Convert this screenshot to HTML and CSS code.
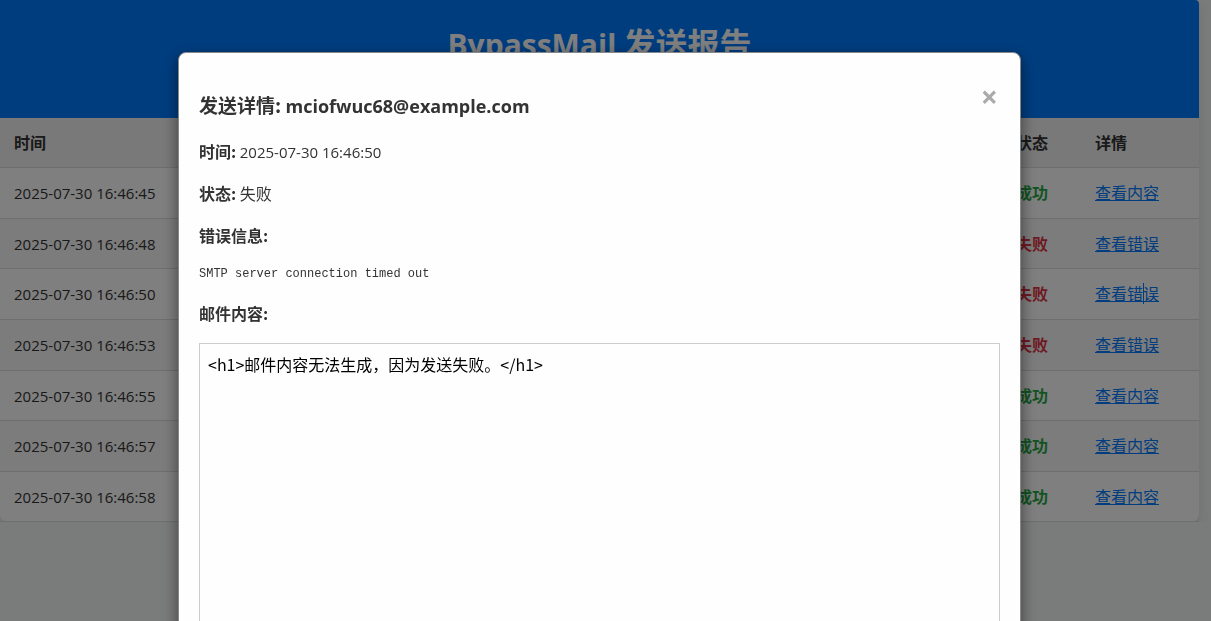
FILE: index.html
```html
<!DOCTYPE html>
<html lang="zh-CN">
<head>
<meta charset="UTF-8">
<meta name="viewport" content="width=device-width, initial-scale=1">
<title>BypassMail 发送报告</title>
<link rel="stylesheet" href="styles.css">
</head>
<body>
<main class="container">
  <header class="header"><h1 class="title"><span class="brand">BypassMail</span> 发送报告</h1></header>
  <table class="report">
    <colgroup><col><col class="col-status"><col class="col-detail"></colgroup>
    <thead><tr><th>时间</th><th>状态</th><th>详情</th></tr></thead>
    <tbody>
      <tr><td><time>2025-07-30 16:46:45</time></td><td class="success">成功</td><td><a href="#detail">查看内容</a></td></tr>
      <tr><td><time>2025-07-30 16:46:48</time></td><td class="failure">失败</td><td><a href="#detail">查看错误</a></td></tr>
      <tr><td><time>2025-07-30 16:46:50</time></td><td class="failure">失败</td><td><a class="caret" href="#detail">查看错误</a></td></tr>
      <tr><td><time>2025-07-30 16:46:53</time></td><td class="failure">失败</td><td><a href="#detail">查看错误</a></td></tr>
      <tr><td><time>2025-07-30 16:46:55</time></td><td class="success">成功</td><td><a href="#detail">查看内容</a></td></tr>
      <tr><td><time>2025-07-30 16:46:57</time></td><td class="success">成功</td><td><a href="#detail">查看内容</a></td></tr>
      <tr><td><time>2025-07-30 16:46:58</time></td><td class="success">成功</td><td><a href="#detail">查看内容</a></td></tr>
    </tbody>
  </table>
</main>
<div class="overlay">
  <section class="modal" id="detail" role="dialog" aria-modal="true" aria-labelledby="detail-title">
    <button class="close" type="button" aria-label="关闭">×</button>
    <h3 class="modal-title" id="detail-title">发送详情: <span class="address">mciofwuc68@example.com</span></h3>
    <p><strong>时间:</strong> <time>2025-07-30 16:46:50</time></p>
    <p><strong>状态:</strong> 失败</p>
    <p><strong>错误信息:</strong></p>
    <pre class="error">SMTP server connection timed out</pre>
    <p><label class="label" for="mail-content">邮件内容:</label></p>
    <textarea class="content" id="mail-content" readonly>&lt;h1&gt;邮件内容无法生成，因为发送失败。&lt;/h1&gt;</textarea>
  </section>
</div>
</body>
</html>
```
FILE: styles.css
```css
* {
  box-sizing: border-box;
}

body {
  margin: 0;
  padding-right: 12px;
  background: #f5f6f6;
  color: #333;
  font: 16px/1.6 "Noto Sans CJK SC", sans-serif;
  overflow: hidden;
}

.container {
  background: #fff;
  border-radius: 0 4px 8px 8px;
  box-shadow: 0 4px 12px rgba(0, 0, 0, 0.1);
}

.header {
  padding: 17px 20px 50px;
  background: #007bff;
  border-radius: 0 4px 0 0;
  color: #fff;
  text-align: center;
}

.title {
  margin: 0;
  font-size: 32px;
}

.brand {
  font-family: "Open Sans", sans-serif;
  font-size: 30px;
  line-height: 1;
}

time {
  font-family: "Open Sans", sans-serif;
  font-size: 15px;
  line-height: 1;
}

.report {
  width: 100%;
  border-collapse: collapse;
  table-layout: fixed;
}

.col-status {
  width: 79px;
}

.col-detail {
  width: 118px;
}

th,
td {
  padding: 12px 14px;
  border-bottom: 1px solid #ddd;
  text-align: left;
}

th {
  background: #f2f2f2;
  line-height: 25px;
}

tbody tr:nth-child(even) {
  background: #f9f9f9;
}

.success,
.failure {
  color: #28a745;
  font-weight: bold;
}

.failure {
  color: #dc3545;
}

a {
  color: #007bff;
}

.caret {
  position: relative;
}

.caret::after {
  content: "";
  position: absolute;
  top: 2px;
  right: 15px;
  width: 1px;
  height: 21px;
  background: #007bff;
}

.overlay {
  position: fixed;
  inset: 0;
  padding: 52px 12px 0 0;
  background: rgba(0, 0, 0, 0.5);
  overflow: hidden;
}

.modal {
  width: 90%;
  max-width: 843px;
  margin: 0 auto;
  padding: 20px;
  background: #fefefe;
  border: 1px solid #888;
  border-radius: 8px;
  box-shadow: 0 5px 15px rgba(0, 0, 0, 0.5);
}

.modal p {
  margin: 16px 0;
}

.modal .modal-title {
  margin: 17px 0 19px;
  font-size: 19px;
}

.address {
  font-family: "Open Sans", sans-serif;
  font-size: 18px;
  line-height: 1;
}

.label {
  font-weight: bold;
}

.close {
  float: right;
  padding: 0 2px;
  background: none;
  border: 0;
  color: #aaa;
  font: bold 30px/48px "Open Sans", sans-serif;
}

.error {
  margin: 16px 0;
  font: 12px/21px "Liberation Mono", monospace;
}

.content {
  display: block;
  width: 100%;
  height: 400px;
  padding: 8px;
  background: #fefefe;
  border: 1px solid #ccc;
  color: #000;
  font: inherit;
  resize: none;
}
```
